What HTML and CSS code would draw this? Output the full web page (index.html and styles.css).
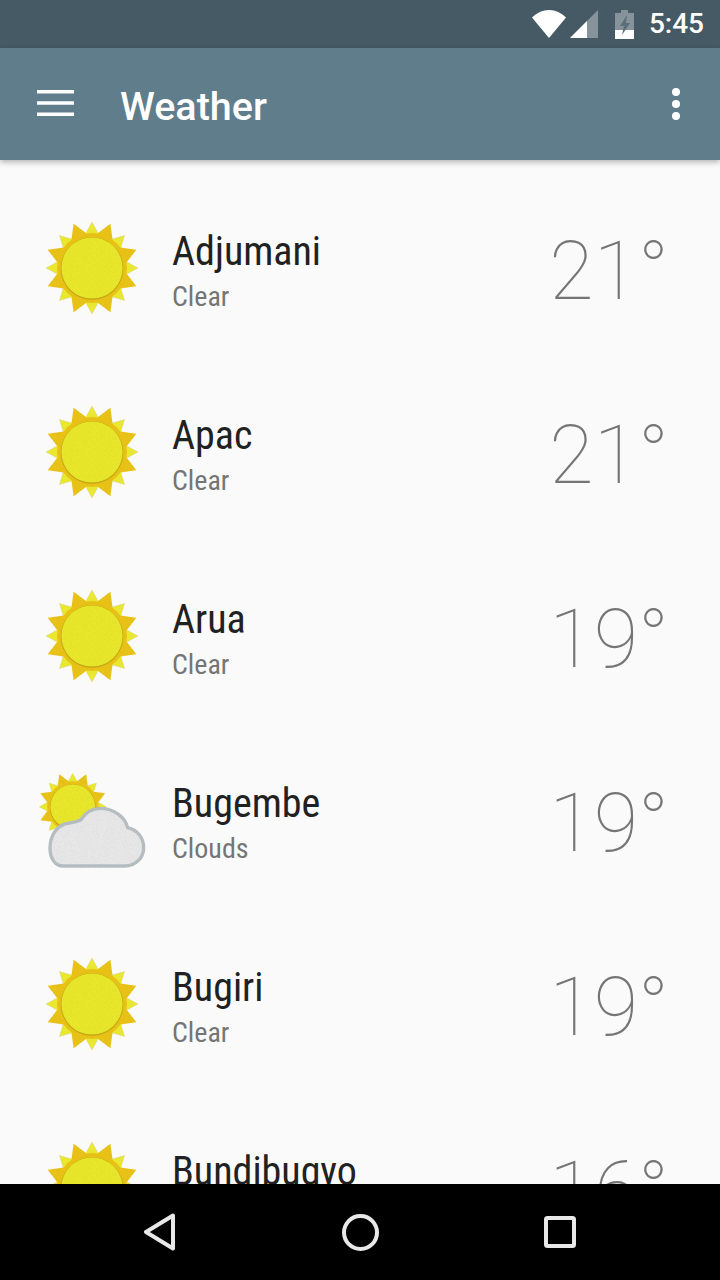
FILE: index.html
```html
<!DOCTYPE html>
<html lang="en">
<head>
<meta charset="utf-8">
<title>Weather</title>
<link rel="stylesheet" href="styles.css">
</head>
<body>
<svg class="defs" width="0" height="0" aria-hidden="true">
  <defs>
    <filter id="paper" x="-5%" y="-5%" width="110%" height="110%">
      <feTurbulence type="fractalNoise" baseFrequency="0.9" numOctaves="2" seed="4" result="n"/>
      <feColorMatrix in="n" type="matrix" values="0 0 0 0 0  0 0 0 0 0  0 0 0 0 0  0.16 0 0 0 -0.05" result="d"/>
      <feComposite in="d" in2="SourceAlpha" operator="in" result="g"/>
      <feMerge><feMergeNode in="SourceGraphic"/><feMergeNode in="g"/></feMerge>
    </filter>
    <polygon id="ray-l" points="48,2 56.800,18 39.200,18"/>
    <polygon id="ray-d" points="48,0 56.200,14 39.800,14"/>
    <g id="sun">
      <g class="ray-light">
        <use href="#ray-l"/>
        <use href="#ray-l" transform="rotate(45 48 48)"/>
        <use href="#ray-l" transform="rotate(90 48 48)"/>
        <use href="#ray-l" transform="rotate(135 48 48)"/>
        <use href="#ray-l" transform="rotate(180 48 48)"/>
        <use href="#ray-l" transform="rotate(225 48 48)"/>
        <use href="#ray-l" transform="rotate(270 48 48)"/>
        <use href="#ray-l" transform="rotate(315 48 48)"/>
      </g>
      <g class="ray-dark">
        <use href="#ray-d" transform="rotate(22.500 48 48)"/>
        <use href="#ray-d" transform="rotate(67.500 48 48)"/>
        <use href="#ray-d" transform="rotate(112.500 48 48)"/>
        <use href="#ray-d" transform="rotate(157.500 48 48)"/>
        <use href="#ray-d" transform="rotate(202.500 48 48)"/>
        <use href="#ray-d" transform="rotate(247.500 48 48)"/>
        <use href="#ray-d" transform="rotate(292.500 48 48)"/>
        <use href="#ray-d" transform="rotate(337.500 48 48)"/>
        <circle cx="48" cy="48" r="35"/>
      </g>
      <circle class="disc-edge" cx="48" cy="48.600" r="31.400"/>
      <circle class="disc" cx="48" cy="48" r="30.600"/>
    </g>
  </defs>
</svg>
<div class="phone">
  <header class="status">
    <svg class="st-wifi" width="34" height="28" viewBox="0 0 34 28"><path d="M0 7.500C4.500 3 10.500 0 17 0s12.500 3 17 7.500L17 28z"/></svg>
    <svg class="st-signal" width="28" height="28" viewBox="0 0 28 28"><path class="dim" d="M28 0v28H0z"/><path d="M17 11v17H0z"/></svg>
    <svg class="st-batt" width="19" height="29" viewBox="0 0 19 29"><path class="dim" d="M6 0h7v3h6v26H0V3h6z"/><path d="M0 20h19v9H0z"/><path class="bolt" d="M12 5 5 16h4l-2 9 8-12h-4z"/></svg>
    <span class="clock">5:45</span>
  </header>
  <div class="appbar">
    <svg class="menu" width="37" height="26" viewBox="0 0 37 26"><path d="M0 0h37v3.500H0zM0 11.250h37v3.500H0zM0 22.500h37V26H0z"/></svg>
    <h1 class="title">Weather</h1>
    <svg class="more" width="8" height="32" viewBox="0 0 8 32"><circle cx="4" cy="4" r="4"/><circle cx="4" cy="16" r="4"/><circle cx="4" cy="28" r="4"/></svg>
  </div>
  <main class="list">
    <article class="row">
      <svg class="icon" viewBox="0 0 96 96"><use href="#sun"/></svg>
      <div class="place"><div class="city">Adjumani</div><div class="cond">Clear</div></div>
      <div class="temp">21°</div>
    </article>
    <article class="row">
      <svg class="icon" viewBox="0 0 96 96"><use href="#sun"/></svg>
      <div class="place"><div class="city">Apac</div><div class="cond">Clear</div></div>
      <div class="temp">21°</div>
    </article>
    <article class="row">
      <svg class="icon" viewBox="0 0 96 96"><use href="#sun"/></svg>
      <div class="place"><div class="city">Arua</div><div class="cond">Clear</div></div>
      <div class="temp">19°</div>
    </article>
    <article class="row">
      <svg class="icon" viewBox="0 0 96 96">
        <use href="#sun" transform="translate(-6.300 -0.300) scale(.73)"/>
        <path class="cloud" transform="translate(-14 -7) scale(.3333)" d="M100 303C75 303 60 280 60 250C60 213 80 178 118 174C130 172 142 170 152 165C165 145 185 130 210 130C250 130 285 155 293 188C322 195 341 218 341 248C341 280 315 303 285 303Z"/>
      </svg>
      <div class="place"><div class="city">Bugembe</div><div class="cond">Clouds</div></div>
      <div class="temp">19°</div>
    </article>
    <article class="row">
      <svg class="icon" viewBox="0 0 96 96"><use href="#sun"/></svg>
      <div class="place"><div class="city">Bugiri</div><div class="cond">Clear</div></div>
      <div class="temp">19°</div>
    </article>
    <article class="row">
      <svg class="icon" viewBox="0 0 96 96"><use href="#sun"/></svg>
      <div class="place"><div class="city">Bundibugyo</div><div class="cond">Clear</div></div>
      <div class="temp">16°</div>
    </article>
  </main>
  <nav class="navbar">
    <svg width="32" height="38" viewBox="0 0 32 38"><path d="M29 2.500 2 19l27 16.500z"/></svg>
    <svg width="37" height="37" viewBox="0 0 37 37"><circle cx="18.500" cy="18.500" r="16.500"/></svg>
    <svg width="32" height="32" viewBox="0 0 32 32"><rect x="2" y="2" width="28" height="28" rx="1.500"/></svg>
  </nav>
</div>
</body>
</html>
```
FILE: styles.css
```css
* { box-sizing: border-box; }
html, body { margin: 0; padding: 0; }
body { font-family: Roboto, "Liberation Sans", sans-serif; background: #fafafa; }
.defs { position: absolute; }
.phone { width: 720px; height: 1280px; display: flex; flex-direction: column; overflow: hidden; }

.status { height: 48px; flex: none; background: #455a64; display: flex; align-items: center; justify-content: flex-end; padding-right: 16px; }
.status svg { fill: #fff; }
.status .dim { fill: #fff; fill-opacity: .35; }
.status .bolt { fill: #5a6f7a; }
.st-wifi { margin-right: 4px; }
.st-signal { margin-right: 17px; }
.st-batt { margin-right: 15px; }
.clock { color: #fff; font-size: 28px; font-weight: 500; line-height: 48px; }

.appbar { height: 112px; flex: none; background: #607d8b; display: flex; align-items: center; padding: 0 40px 0 37px; box-shadow: 0 2px 6px rgba(0,0,0,.3); position: relative; z-index: 1; }
.menu { fill: #fff; flex: none; margin-bottom: 2px; }
.title { margin: 6px 0 0 46px; flex: 1; color: #fff; font-size: 39.500px; font-weight: 500; line-height: 48px; }
.more { fill: #fff; flex: none; }

.list { flex: 1; min-height: 0; overflow: hidden; padding-top: 16px; background: #fafafa; }
.row { height: 184px; display: flex; align-items: center; padding: 0 51px 0 44px; }
.icon { width: 96px; height: 96px; flex: none; overflow: visible; }
.ray-light { fill: #e9e82f; stroke: #cfcf9a; stroke-width: .4; }
.ray-dark { fill: #e8c116; }
.disc-edge { fill: #b89b14; fill-opacity: .75; }
.disc { fill: #e9e82e; filter: url(#paper); }
.cloud { fill: #e8e8e8; stroke: #b8c0c4; stroke-width: 10; filter: url(#paper); }

.place { flex: 1; margin-left: 32px; padding-top: 7px; }
.city { font-size: 40px; line-height: 48px; color: #212121; font-stretch: 75%; }
.cond { font-size: 28px; line-height: 36px; margin-top: 3px; color: #757575; font-stretch: 75%; }
.temp { font-size: 81px; line-height: 100px; font-weight: 100; color: #757575; margin-top: 8px; }

.navbar { height: 96px; flex: none; background: #000; display: flex; align-items: center; justify-content: space-between; padding: 0 144px; }
.navbar svg { fill: none; stroke: #e8e8e8; stroke-width: 4; stroke-linejoin: round; }
```
